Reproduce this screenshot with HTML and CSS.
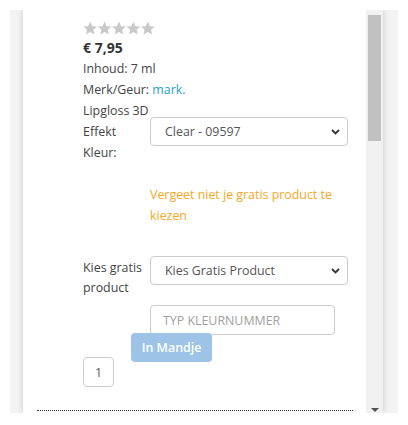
FILE: index.html
```html
<!DOCTYPE html>
<html lang="nl">
<head>
    <meta charset="UTF-8">
    <meta name="viewport" content="width=device-width, initial-scale=1.0">
    <title>Lipgloss 3D Effekt</title>
    <link rel="stylesheet" href="styles.css">
</head>
<body>
    <div class="frame">
        <div class="panel">
            <div class="content">
                <div class="stars">
                    <svg width="72" height="15" viewBox="0 0 70 14">
                        <g fill="#c9c9c9">
                            <polygon points="7,0.3 9,4.7 13.7,5.1 10.1,8.2 11.2,12.9 7,10.4 2.8,12.9 3.9,8.2 0.3,5.1 5,4.7"/>
                            <polygon transform="translate(14 0)" points="7,0.3 9,4.7 13.7,5.1 10.1,8.2 11.2,12.9 7,10.4 2.8,12.9 3.9,8.2 0.3,5.1 5,4.7"/>
                            <polygon transform="translate(28 0)" points="7,0.3 9,4.7 13.7,5.1 10.1,8.2 11.2,12.9 7,10.4 2.8,12.9 3.9,8.2 0.3,5.1 5,4.7"/>
                            <polygon transform="translate(42 0)" points="7,0.3 9,4.7 13.7,5.1 10.1,8.2 11.2,12.9 7,10.4 2.8,12.9 3.9,8.2 0.3,5.1 5,4.7"/>
                            <polygon transform="translate(56 0)" points="7,0.3 9,4.7 13.7,5.1 10.1,8.2 11.2,12.9 7,10.4 2.8,12.9 3.9,8.2 0.3,5.1 5,4.7"/>
                        </g>
                    </svg>
                </div>
                <div class="price">€ 7,95</div>
                <div class="info">Inhoud: 7 ml</div>
                <div class="info">Merk/Geur: <a class="brand" href="#">mark.</a></div>

                <div class="row row-center">
                    <div class="label">Lipgloss 3D Effekt Kleur:</div>
                    <div class="select">
                        <select>
                            <option>Clear - 09597</option>
                        </select>
                        <svg class="chevron" width="9" height="6" viewBox="0 0 9 6"><path d="M1 1 L4.5 4.5 L8 1" fill="none" stroke="#333" stroke-width="1.8"/></svg>
                    </div>
                </div>

                <p class="notice">Vergeet niet je gratis product te kiezen</p>

                <div class="row row-top">
                    <div class="label label-top">Kies gratis product</div>
                    <div class="select">
                        <select>
                            <option>Kies Gratis Product</option>
                        </select>
                        <svg class="chevron" width="9" height="6" viewBox="0 0 9 6"><path d="M1 1 L4.5 4.5 L8 1" fill="none" stroke="#333" stroke-width="1.8"/></svg>
                    </div>
                </div>

                <input class="color-input" type="text" placeholder="TYP KLEURNUMMER">
                <button class="cart-btn">In Mandje</button>
                <input class="qty" type="text" value="1">

                <div class="divider"></div>
            </div>
            <div class="scrollbar">
                <div class="thumb"></div>
                <div class="arrow"></div>
            </div>
        </div>
    </div>
</body>
</html>
```

FILE: styles.css
```css
body {
    margin: 0;
    background: #fff;
    font-family: "Open Sans", Arial, sans-serif;
    font-size: 12.4px;
    color: #444;
}

.frame {
    margin: 10px 10px 0;
    height: 403px;
    background: #f3f3f3;
    padding: 0 15px 0 13px;
    overflow: hidden;
}

.panel {
    display: flex;
    height: 100%;
    background: #fff;
    box-shadow: 0 0 6px rgba(0, 0, 0, 0.18);
}

.content {
    flex: 1;
    padding: 11px 0 0 60px;
    overflow: hidden;
}

.stars {
    height: 15px;
    line-height: 0;
}

.price {
    margin-top: 1px;
    font-weight: 700;
    font-size: 14px;
    line-height: 21px;
    color: #333;
}

.info {
    line-height: 21px;
}

.brand {
    color: #26a2c6;
    text-decoration: none;
}

.row {
    display: flex;
}

.row-center {
    align-items: center;
}

.row-top {
    align-items: flex-start;
    margin-top: 30px;
}

.label {
    width: 67px;
    line-height: 21px;
}

.label-top {
    margin-top: 2px;
    line-height: 20px;
}

.select {
    position: relative;
    width: 198px;
    height: 29px;
}

.select select {
    appearance: none;
    -webkit-appearance: none;
    width: 100%;
    height: 100%;
    border: 1px solid #ccc;
    border-radius: 4px;
    background: #fff;
    padding: 0 0 0 14px;
    font-family: inherit;
    font-size: 12.4px;
    color: #555;
}

.chevron {
    position: absolute;
    right: 8px;
    top: 12px;
}

.notice {
    margin: 21px 0 0 67px;
    width: 192px;
    line-height: 21px;
    color: #f4a825;
}

.color-input {
    display: block;
    margin: 7px 0 0 67px;
    width: 185px;
    height: 30px;
    box-sizing: border-box;
    border: 1px solid #ccc;
    border-radius: 4px;
    padding: 0 12px;
    font-family: inherit;
    font-size: 12.4px;
}

.color-input::placeholder {
    color: #a0a0a0;
}

.cart-btn {
    display: block;
    margin: -2px 0 0 48px;
    width: 81px;
    height: 29px;
    border: 0;
    border-radius: 4px;
    background: #9dc4e6;
    color: #fff;
    font-family: inherit;
    font-size: 12.4px;
    font-weight: 600;
    padding: 0;
}

.qty {
    display: block;
    margin-top: -5px;
    width: 31px;
    height: 30px;
    box-sizing: border-box;
    border: 1px solid #ccc;
    border-radius: 4px;
    text-align: center;
    font-family: inherit;
    font-size: 12.4px;
    color: #555;
}

.divider {
    margin: 23px 13px 0 -46px;
    border-top: 1px dotted #333;
}

.scrollbar {
    width: 17px;
    background: #f1f1f1;
    display: flex;
    flex-direction: column;
    align-items: center;
}

.thumb {
    margin-top: 5px;
    width: 13px;
    height: 126px;
    background: #c1c1c1;
}

.arrow {
    margin-top: auto;
    margin-bottom: 1px;
    width: 0;
    height: 0;
    border-left: 4px solid transparent;
    border-right: 4px solid transparent;
    border-top: 4px solid #505050;
}
```
